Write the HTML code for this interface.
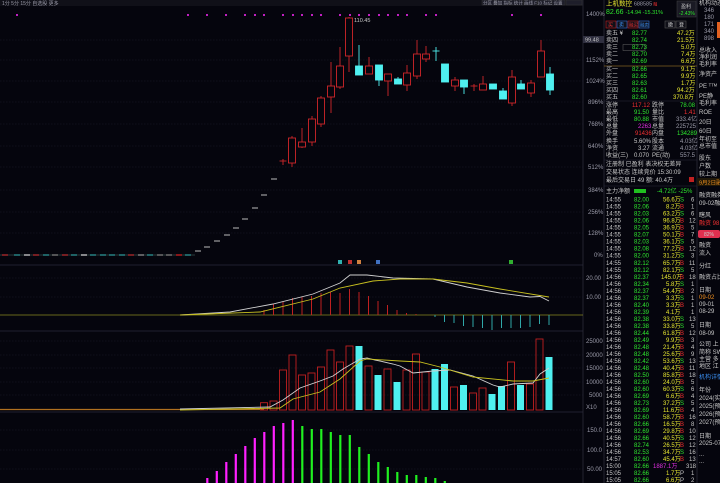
<!DOCTYPE html>
<html><head><meta charset="utf-8"><style>
html,body{margin:0;padding:0;background:#05050d;width:720px;height:483px;overflow:hidden}
svg{display:block}
text{font-family:"Liberation Sans","Noto Sans CJK SC",sans-serif;font-size:6px}
.g{fill:#2ee62e}.r{fill:#f03030}.y{fill:#e8e830}.w{fill:#c8c8c8}.d{fill:#9a9aa8}.p{fill:#e030e0}.o{fill:#f09020}.b{fill:#3a8ef0}
</style></head><body>
<svg width="720" height="483" viewBox="0 0 720 483" xmlns="http://www.w3.org/2000/svg">
<rect width="720" height="483" fill="#05050d"/>
<!-- top toolbar -->
<rect x="0" y="0" width="583" height="6" fill="#101018"/>
<text x="2" y="5" class="d" style="font-size:5px">1分  5分  15分  自选股  更多</text>
<g fill="#1e1e2a" stroke="#333" stroke-width="0.5">
<rect x="482" y="0" width="13" height="5"/><rect x="496" y="0" width="13" height="5"/><rect x="510" y="0" width="13" height="5"/><rect x="524" y="0" width="13" height="5"/><rect x="538" y="0" width="13" height="5"/><rect x="552" y="0" width="13" height="5"/><rect x="566" y="0" width="16" height="5"/></g>
<text x="483" y="4.5" class="d" style="font-size:4.5px">分区  叠加  指标  统计  画线  F10  标记  设置</text>
<!-- grid -->
<g stroke="#1a1a28" stroke-width="0.6" stroke-dasharray="1.5,1.5">
<line x1="0" y1="40" x2="583" y2="40"/><line x1="0" y1="60" x2="583" y2="60"/><line x1="0" y1="81" x2="583" y2="81"/><line x1="0" y1="102" x2="583" y2="102"/><line x1="0" y1="124" x2="583" y2="124"/><line x1="0" y1="146" x2="583" y2="146"/><line x1="0" y1="167" x2="583" y2="167"/><line x1="0" y1="190" x2="583" y2="190"/><line x1="0" y1="212" x2="583" y2="212"/><line x1="0" y1="233" x2="583" y2="233"/>
<line x1="0" y1="278" x2="583" y2="278"/><line x1="0" y1="297" x2="583" y2="297"/>
<line x1="0" y1="341" x2="583" y2="341"/><line x1="0" y1="355" x2="583" y2="355"/><line x1="0" y1="368" x2="583" y2="368"/><line x1="0" y1="382" x2="583" y2="382"/><line x1="0" y1="395" x2="583" y2="395"/>
<line x1="0" y1="430" x2="583" y2="430"/><line x1="0" y1="450" x2="583" y2="450"/><line x1="0" y1="469" x2="583" y2="469"/>
</g>
<g stroke="#2a2a3a" stroke-width="0.8"><line x1="0" y1="265" x2="583" y2="265"/><line x1="0" y1="331" x2="583" y2="331"/><line x1="0" y1="412" x2="583" y2="412"/><line x1="583" y1="0" x2="583" y2="483"/><line x1="604" y1="0" x2="604" y2="483"/><line x1="697" y1="0" x2="697" y2="483"/></g>
<!-- purple dots -->
<g fill="#c020c0">
<rect x="16" y="14" width="2" height="2"/><rect x="187" y="14" width="2" height="2"/><rect x="206" y="14" width="2" height="2"/><rect x="225" y="14" width="2" height="2"/><rect x="244" y="14" width="2" height="2"/><rect x="254" y="14" width="2" height="2"/><rect x="263" y="14" width="2" height="2"/><rect x="282" y="14" width="2" height="2"/><rect x="292" y="14" width="2" height="2"/><rect x="301" y="14" width="2" height="2"/><rect x="311" y="14" width="2" height="2"/><rect x="320" y="14" width="2" height="2"/><rect x="339" y="14" width="2" height="2"/><rect x="349" y="14" width="2" height="2"/><rect x="358" y="14" width="2" height="2"/><rect x="368" y="14" width="2" height="2"/><rect x="378" y="14" width="2" height="2"/><rect x="387" y="14" width="2" height="2"/><rect x="397" y="14" width="2" height="2"/><rect x="406" y="14" width="2" height="2"/><rect x="425" y="14" width="2" height="2"/><rect x="435" y="14" width="2" height="2"/><rect x="511" y="14" width="2" height="2"/><rect x="540" y="14" width="2" height="2"/></g>
<!-- flat early line -->
<line x1="0" y1="255" x2="195" y2="255" stroke="#2a3a3a" stroke-width="1"/>
<g stroke-width="1.2">
<line x1="2" y1="255" x2="8" y2="255" stroke="#c03030"/><line x1="14" y1="255" x2="20" y2="255" stroke="#30a0a0"/><line x1="24" y1="255" x2="30" y2="255" stroke="#ddd"/><line x1="33" y1="255" x2="39" y2="255" stroke="#c03030"/><line x1="43" y1="255" x2="49" y2="255" stroke="#30a0a0"/><line x1="52" y1="255" x2="58" y2="255" stroke="#888"/><line x1="62" y1="255" x2="68" y2="255" stroke="#c03030"/><line x1="71" y1="255" x2="77" y2="255" stroke="#30a0a0"/><line x1="81" y1="255" x2="87" y2="255" stroke="#ddd"/><line x1="90" y1="255" x2="96" y2="255" stroke="#30a0a0"/><line x1="100" y1="255" x2="106" y2="255" stroke="#30a0a0"/><line x1="109" y1="255" x2="115" y2="255" stroke="#30a0a0"/><line x1="119" y1="255" x2="125" y2="255" stroke="#30a0a0"/><line x1="128" y1="255" x2="134" y2="255" stroke="#c03030"/><line x1="138" y1="255" x2="144" y2="255" stroke="#999"/><line x1="147" y1="255" x2="153" y2="255" stroke="#30a0a0"/><line x1="157" y1="255" x2="163" y2="255" stroke="#888"/><line x1="166" y1="255" x2="172" y2="255" stroke="#888"/><line x1="176" y1="255" x2="182" y2="255" stroke="#e02020"/><line x1="185" y1="255" x2="191" y2="255" stroke="#30a0a0"/>
</g>
<g stroke="#bbb" stroke-width="1">
<line x1="195" y1="251" x2="201" y2="251"/><line x1="204" y1="247" x2="210" y2="247"/><line x1="214" y1="241" x2="220" y2="241"/><line x1="224" y1="235" x2="230" y2="235"/><line x1="233" y1="228" x2="239" y2="228"/><line x1="242" y1="219" x2="248" y2="219"/><line x1="252" y1="208" x2="258" y2="208"/><line x1="261" y1="195" x2="267" y2="195"/><line x1="271" y1="179" x2="277" y2="179"/>
</g>
<!-- candles -->
<g stroke="#d0262a" stroke-width="0.9" fill="#05050d">
<line x1="283" y1="159" x2="283" y2="165"/><line x1="279.5" y1="161" x2="286.5" y2="161"/>
<line x1="292" y1="136" x2="292" y2="167"/><rect x="288.5" y="138" width="7" height="25"/>
<line x1="302" y1="128" x2="302" y2="148"/><rect x="298.5" y="142" width="7" height="5"/>
<line x1="312" y1="116" x2="312" y2="146"/><rect x="308.5" y="119" width="7" height="23"/>
<line x1="321" y1="96" x2="321" y2="127"/><rect x="317.5" y="98" width="7" height="26"/>
<line x1="331" y1="62" x2="331" y2="113"/><rect x="327.5" y="86" width="7" height="11"/>
<line x1="340" y1="47" x2="340" y2="89"/><rect x="336.5" y="66" width="7" height="21"/>
<line x1="349" y1="17" x2="349" y2="72"/><rect x="345.5" y="18" width="7" height="38"/>
<line x1="369" y1="57" x2="369" y2="74"/><rect x="365.5" y="66" width="7" height="8"/>
<line x1="388" y1="74" x2="388" y2="96"/><rect x="384.5" y="74" width="7" height="7"/>
<line x1="407" y1="65" x2="407" y2="91"/><rect x="403.5" y="73" width="7" height="12"/>
<line x1="417" y1="40" x2="417" y2="79"/><rect x="413.5" y="54" width="7" height="22"/>
<line x1="426" y1="46" x2="426" y2="62"/><rect x="422.5" y="54" width="7" height="5"/>
<line x1="455" y1="77" x2="455" y2="91"/><rect x="451.5" y="80" width="7" height="6"/>
<line x1="474" y1="84" x2="474" y2="91"/><line x1="470.5" y1="86" x2="477.5" y2="86"/>
<line x1="483" y1="76" x2="483" y2="90"/><rect x="479.5" y="84" width="7" height="6"/>
<line x1="512" y1="70" x2="512" y2="106"/><rect x="508.5" y="77" width="7" height="26"/>
<line x1="531" y1="80" x2="531" y2="97"/><rect x="527.5" y="83" width="7" height="10"/>
<line x1="541" y1="40" x2="541" y2="77"/><rect x="537.5" y="51" width="7" height="26"/>
</g>
<g stroke="#4ff0f0" stroke-width="0.9" fill="#4ff0f0">
<line x1="359" y1="45" x2="359" y2="75"/><rect x="355.5" y="66" width="7" height="9"/>
<line x1="379" y1="65" x2="379" y2="86"/><rect x="375.5" y="65" width="7" height="15"/>
<line x1="398" y1="77" x2="398" y2="84"/><rect x="394.5" y="79" width="7" height="5"/>
<line x1="436" y1="47" x2="436" y2="61"/><line x1="432.5" y1="51" x2="439.5" y2="51"/>
<rect x="441.5" y="64" width="7" height="18"/>
<line x1="464" y1="80" x2="464" y2="94"/><rect x="460.5" y="80" width="7" height="7"/>
<rect x="489.5" y="84" width="7" height="5"/>
<line x1="503" y1="88" x2="503" y2="99"/><rect x="499.5" y="91" width="7" height="8"/>
<line x1="521" y1="80" x2="521" y2="89"/><rect x="517.5" y="84" width="7" height="5"/>
<line x1="550" y1="67" x2="550" y2="95"/><rect x="546.5" y="74" width="7" height="16"/>
</g>
<text x="354" y="22" class="w" style="font-size:5.5px">110.45</text>
<!-- markers -->
<rect x="338" y="260" width="4" height="4" fill="#30b0b0"/><rect x="348" y="260" width="4" height="4" fill="#c03030"/><rect x="357" y="260" width="4" height="4" fill="#d08040"/><rect x="376" y="260" width="4" height="4" fill="#4070c0"/><rect x="509" y="260" width="4" height="4" fill="#30b030"/>
<!-- MACD -->
<line x1="0" y1="315" x2="583" y2="315" stroke="#8a8a20" stroke-width="0.8"/>
<g stroke="#c02020" stroke-width="1">
<line x1="264" y1="315" x2="264" y2="310"/><line x1="273.5" y1="315" x2="273.5" y2="304"/><line x1="283" y1="315" x2="283" y2="302"/><line x1="292.5" y1="315" x2="292.5" y2="298"/><line x1="302" y1="315" x2="302" y2="297"/><line x1="311.5" y1="315" x2="311.5" y2="296"/><line x1="321" y1="315" x2="321" y2="293"/><line x1="330.5" y1="315" x2="330.5" y2="292"/><line x1="340" y1="315" x2="340" y2="293"/><line x1="349.5" y1="315" x2="349.5" y2="289"/><line x1="359" y1="315" x2="359" y2="292"/><line x1="368.5" y1="315" x2="368.5" y2="296"/><line x1="378" y1="315" x2="378" y2="301"/><line x1="387.5" y1="315" x2="387.5" y2="305"/><line x1="397" y1="315" x2="397" y2="310"/><line x1="406.5" y1="315" x2="406.5" y2="313"/><line x1="416" y1="315" x2="416" y2="314"/></g>
<g stroke="#30a8a8" stroke-width="1">
<line x1="435" y1="315" x2="435" y2="317"/><line x1="444.5" y1="315" x2="444.5" y2="322"/><line x1="454" y1="315" x2="454" y2="323"/><line x1="463.5" y1="315" x2="463.5" y2="326"/><line x1="473" y1="315" x2="473" y2="327"/><line x1="482.5" y1="315" x2="482.5" y2="328"/><line x1="492" y1="315" x2="492" y2="330"/><line x1="501.5" y1="315" x2="501.5" y2="328"/><line x1="511" y1="315" x2="511" y2="328"/><line x1="520.5" y1="315" x2="520.5" y2="328"/><line x1="530" y1="315" x2="530" y2="327"/><line x1="539.5" y1="315" x2="539.5" y2="324"/><line x1="549" y1="315" x2="549" y2="325"/></g>
<polyline fill="none" stroke="#d0d0d0" stroke-width="0.9" points="180,315 230,312 273,304 313,294 340,283 350,275 367,275 393,278 433,279 467,287 500,293 530,297 540,296.5 549,301"/>
<polyline fill="none" stroke="#c8c020" stroke-width="0.9" points="180,315 260,312 313,299 340,288 373,281 400,279 433,279 467,283 500,289 549,297"/>
<!-- volume -->
<line x1="0" y1="409.5" x2="264" y2="409.5" stroke="#b07020" stroke-width="1.2"/>
<g stroke="#c02020" stroke-width="0.9" fill="none">
<rect x="260.5" y="402.7" width="7" height="7.3"/><rect x="270" y="401" width="7" height="9"/><rect x="279.5" y="370" width="7" height="40"/><rect x="289" y="355" width="7" height="55"/><rect x="298.5" y="375" width="7" height="35"/><rect x="308" y="373" width="7" height="37"/><rect x="317.5" y="367" width="7" height="43"/><rect x="327" y="350" width="7" height="60"/><rect x="336.5" y="362" width="7" height="48"/><rect x="346" y="346" width="7" height="64"/><rect x="365" y="366" width="7" height="44"/><rect x="384" y="369" width="7" height="41"/><rect x="403" y="370" width="7" height="40"/><rect x="412.5" y="354" width="7" height="56"/><rect x="422" y="372" width="7" height="38"/><rect x="450.5" y="387" width="7" height="23"/><rect x="469.5" y="393" width="7" height="17"/><rect x="479" y="388" width="7" height="22"/><rect x="507.5" y="362" width="7" height="48"/><rect x="526.5" y="384" width="7" height="26"/><rect x="536" y="339" width="7" height="71"/></g>
<g fill="#4ff0f0">
<rect x="355.5" y="346" width="7" height="64"/><rect x="374.5" y="375" width="7" height="35"/><rect x="393.5" y="382" width="7" height="28"/><rect x="431.5" y="369" width="7" height="41"/><rect x="441" y="364" width="7" height="46"/><rect x="460" y="385" width="7" height="25"/><rect x="488.5" y="394" width="7" height="16"/><rect x="498" y="386" width="7" height="24"/><rect x="517" y="385" width="7" height="25"/><rect x="545.5" y="357" width="7" height="53"/></g>
<polyline fill="none" stroke="#d0d0d0" stroke-width="0.9" points="180,409 270,407 283,400 300,388 320,381 333,376 343,369 360,359 367,358 375,360 380,361 393,364 400,366 413,373 433,371 450,370 473,376 493,385 500,387 513,384 533,383 540,374 549,368"/>
<polyline fill="none" stroke="#c8c020" stroke-width="0.9" points="180,410 280,408 293,399 320,392 340,379 360,361 367,359 400,361 420,362 440,367 473,377 513,381 533,381 549,378"/>
<!-- bottom bars -->
<g stroke="#ff20ff" stroke-width="2.2">
<line x1="207.3" y1="483" x2="207.3" y2="478"/><line x1="216.8" y1="483" x2="216.8" y2="471"/><line x1="226.3" y1="483" x2="226.3" y2="462"/><line x1="235.8" y1="483" x2="235.8" y2="454"/><line x1="245.3" y1="483" x2="245.3" y2="446"/><line x1="254.8" y1="483" x2="254.8" y2="438"/><line x1="264.3" y1="483" x2="264.3" y2="432"/><line x1="273.8" y1="483" x2="273.8" y2="426"/><line x1="283.3" y1="483" x2="283.3" y2="423"/><line x1="292.8" y1="483" x2="292.8" y2="420"/></g>
<g stroke="#20f020" stroke-width="2.2">
<line x1="302.3" y1="483" x2="302.3" y2="426"/><line x1="311.8" y1="483" x2="311.8" y2="429"/><line x1="321.3" y1="483" x2="321.3" y2="429"/><line x1="330.8" y1="483" x2="330.8" y2="432"/><line x1="340.3" y1="483" x2="340.3" y2="435"/><line x1="349.8" y1="483" x2="349.8" y2="435"/><line x1="359.3" y1="483" x2="359.3" y2="447"/><line x1="368.8" y1="483" x2="368.8" y2="454"/><line x1="378.3" y1="483" x2="378.3" y2="462"/><line x1="387.8" y1="483" x2="387.8" y2="467"/><line x1="397.3" y1="483" x2="397.3" y2="472"/><line x1="406.8" y1="483" x2="406.8" y2="475"/><line x1="416.3" y1="483" x2="416.3" y2="475"/><line x1="425.8" y1="483" x2="425.8" y2="477"/><line x1="435.3" y1="483" x2="435.3" y2="478"/><line x1="444.8" y1="483" x2="444.8" y2="481"/></g>
<!-- axis labels -->
<g class="d" style="font-size:5.5px">
<text x="586" y="16">1400%</text><text x="586" y="62">1152%</text><text x="586" y="83">1024%</text><text x="588" y="104">896%</text><text x="588" y="126">768%</text><text x="588" y="148">640%</text><text x="588" y="169">512%</text><text x="588" y="192">384%</text><text x="588" y="214">256%</text><text x="588" y="235">128%</text><text x="594" y="257">0%</text>
<text x="586" y="280">20.00</text><text x="586" y="299">10.00</text>
<text x="586" y="343">25000</text><text x="586" y="357">20000</text><text x="586" y="370">15000</text><text x="586" y="384">10000</text><text x="589" y="397">5000</text><text x="586" y="409">X10</text>
<text x="587" y="432">150.0</text><text x="587" y="452">100.0</text><text x="587" y="471">50.00</text></g>
<rect x="583" y="36" width="21" height="7" fill="#303040"/><text x="585" y="41.5" class="w" style="font-size:5.5px">99.48</text>
<!-- right panel header -->
<text x="606" y="5.5" class="y" style="font-size:6.5px">上机数控 <tspan class="d" style="font-size:5.5px">688585</tspan><tspan class="r" style="font-size:4px"> 融</tspan></text>
<text x="606" y="14" class="g" style="font-size:7px">82.66 <tspan style="font-size:5.5px"> -14.94  -15.31%</tspan></text>
<rect x="677" y="1" width="19" height="16" fill="#1a1a24" stroke="#444" stroke-width="0.5"/><text x="681" y="8" class="w" style="font-size:5px">盈利</text><text x="679" y="15" class="g" style="font-size:5px">-2.43%</text>
<g stroke-width="0.6" fill="#101018"><rect x="606" y="21" width="10" height="7" stroke="#c02020"/><rect x="617" y="21" width="10" height="7" stroke="#3070d0"/><rect x="628" y="21" width="10" height="7" stroke="#c02020"/><rect x="639" y="21" width="10" height="7" stroke="#3070d0"/><rect x="665" y="21" width="10" height="7" stroke="#555"/><rect x="676" y="21" width="10" height="7" stroke="#555"/></g>
<text x="608" y="26.5" class="r" style="font-size:5px">买</text><text x="619" y="26.5" class="b" style="font-size:5px">卖</text><text x="629" y="26.5" class="r" style="font-size:4.5px">融买</text><text x="640" y="26.5" class="b" style="font-size:4.5px">融卖</text><text x="668" y="26.5" class="w" style="font-size:5px">撤</text><text x="679" y="26.5" class="w" style="font-size:5px">登</text>
<g style="font-size:5.5px">
<text x="606" y="35" class="w">卖五 ¥</text><text x="632" y="35" class="g">82.77</text><text x="677" y="35" class="y">47.2万</text>
<text x="606" y="42" class="w">卖四</text><text x="632" y="42" class="g">82.74</text><text x="677" y="42" class="y">21.5万</text>
<text x="606" y="49" class="w">卖三</text><rect x="623" y="44.5" width="22" height="6" fill="none" stroke="#666" stroke-width="0.5"/><text x="632" y="49" class="g">82.73</text><text x="681" y="49" class="y">5.0万</text>
<text x="606" y="56" class="w">卖二</text><text x="632" y="56" class="g">82.70</text><text x="681" y="56" class="y">7.4万</text>
<text x="606" y="63" class="w">卖一</text><text x="632" y="63" class="g">82.69</text><text x="681" y="63" class="y">6.6万</text>
<line x1="604" y1="66" x2="697" y2="66" stroke="#806020" stroke-width="0.8"/>
<text x="606" y="71" class="w">买一</text><text x="632" y="71" class="g">82.66</text><text x="681" y="71" class="y">9.1万</text>
<text x="606" y="78" class="w">买二</text><text x="632" y="78" class="g">82.65</text><text x="681" y="78" class="y">9.9万</text>
<text x="606" y="85" class="w">买三</text><text x="632" y="85" class="g">82.63</text><text x="681" y="85" class="y">1.7万</text>
<text x="606" y="92" class="w">买四</text><text x="632" y="92" class="g">82.61</text><text x="677" y="92" class="y">94.2万</text>
<text x="606" y="99" class="w">买五</text><text x="632" y="99" class="g">82.60</text><text x="673" y="99" class="y">370.8万</text>
<line x1="604" y1="101" x2="697" y2="101" stroke="#2a2a3a" stroke-width="0.6"/>
<text x="606" y="107" class="w">涨停</text><text x="632" y="107" class="r">117.12</text><text x="652" y="107" class="w">跌停</text><text x="680" y="107" class="g">78.08</text>
<text x="606" y="114" class="w">最高</text><text x="634" y="114" class="g">91.50</text><text x="652" y="114" class="w">量比</text><text x="684" y="114" class="r">1.41</text>
<text x="606" y="121" class="w">最低</text><text x="634" y="121" class="g">80.88</text><text x="652" y="121" class="w">市值</text><text x="676" y="121" class="d">333.4亿</text>
<text x="606" y="128" class="w">总量</text><text x="638" y="128" class="p">2263</text><text x="652" y="128" class="w">总量</text><text x="676" y="128" class="d">225725</text>
<text x="606" y="135" class="w">外盘</text><text x="635" y="135" class="r">91436</text><text x="652" y="135" class="w">内盘</text><text x="677" y="135" class="g">134289</text>
<text x="606" y="143" class="w">换手</text><text x="634" y="143" class="w">5.60%</text><text x="652" y="143" class="w">股本</text><text x="680" y="143" class="d">4.03亿</text>
<text x="606" y="150" class="w">净资</text><text x="638" y="150" class="w">3.27</text><text x="652" y="150" class="w">流通</text><text x="680" y="150" class="d">4.03亿</text>
<text x="606" y="157" class="w">收益(三)</text><text x="634" y="157" class="w">0.070</text><text x="652" y="157" class="w">PE(动)</text><text x="680" y="157" class="d">557.5</text>
<line x1="604" y1="160" x2="697" y2="160" stroke="#2a2a3a" stroke-width="0.6"/>
<text x="606" y="166" class="w">注册制 已盈利 表决权无差异</text>
<text x="606" y="174" class="w">交易状态 连续竞价 15:30:09</text>
<text x="606" y="182" class="w">最后交易日 49  额: 40.4万</text><rect x="689" y="177" width="5" height="5" fill="#c02020"/>
<line x1="604" y1="186" x2="697" y2="186" stroke="#2a2a3a" stroke-width="0.6"/>
<text x="606" y="193" class="w">主力净额</text><rect x="634" y="189" width="12" height="4" fill="#20c020"/><text x="657" y="193" class="g">-4.72亿 -25%</text>
</g>
<!-- trade ticks -->
<g style="font-size:5.5px">
<text x="606" y="201.5" class="w">14:55</text><text x="634" y="201.5" class="g">82.00</text><text x="663" y="201.5" class="y">56.6万</text><text x="680" y="201.5" class="g">S</text><text x="691" y="201.5" class="w">6</text>
<text x="606" y="208.5" class="w">14:55</text><text x="634" y="208.5" class="g">82.06</text><text x="666" y="208.5" class="y">8.2万</text><text x="680" y="208.5" class="r">B</text><text x="691" y="208.5" class="w">1</text>
<text x="606" y="215.6" class="w">14:55</text><text x="634" y="215.6" class="g">82.03</text><text x="663" y="215.6" class="y">63.2万</text><text x="680" y="215.6" class="g">S</text><text x="691" y="215.6" class="w">6</text>
<text x="606" y="222.6" class="w">14:55</text><text x="634" y="222.6" class="g">82.06</text><text x="663" y="222.6" class="y">96.8万</text><text x="680" y="222.6" class="r">B</text><text x="689" y="222.6" class="w">12</text>
<text x="606" y="229.6" class="w">14:55</text><text x="634" y="229.6" class="g">82.05</text><text x="663" y="229.6" class="y">36.9万</text><text x="680" y="229.6" class="r">B</text><text x="691" y="229.6" class="w">5</text>
<text x="606" y="236.7" class="w">14:55</text><text x="634" y="236.7" class="g">82.07</text><text x="663" y="236.7" class="y">50.1万</text><text x="680" y="236.7" class="r">B</text><text x="691" y="236.7" class="w">7</text>
<text x="606" y="243.7" class="w">14:55</text><text x="634" y="243.7" class="g">82.03</text><text x="663" y="243.7" class="y">36.1万</text><text x="680" y="243.7" class="g">S</text><text x="691" y="243.7" class="w">5</text>
<text x="606" y="250.7" class="w">14:55</text><text x="634" y="250.7" class="g">82.08</text><text x="663" y="250.7" class="y">77.2万</text><text x="680" y="250.7" class="r">B</text><text x="689" y="250.7" class="w">12</text>
<text x="606" y="257.7" class="w">14:55</text><text x="634" y="257.7" class="g">82.00</text><text x="663" y="257.7" class="y">31.2万</text><text x="680" y="257.7" class="g">S</text><text x="691" y="257.7" class="w">3</text>
<text x="606" y="264.8" class="w">14:55</text><text x="634" y="264.8" class="g">82.12</text><text x="663" y="264.8" class="y">65.7万</text><text x="680" y="264.8" class="r">B</text><text x="689" y="264.8" class="w">11</text>
<text x="606" y="271.8" class="w">14:55</text><text x="634" y="271.8" class="g">82.12</text><text x="663" y="271.8" class="y">82.1万</text><text x="680" y="271.8" class="g">S</text><text x="691" y="271.8" class="w">5</text>
<text x="606" y="278.8" class="w">14:56</text><text x="634" y="278.8" class="g">82.37</text><text x="661" y="278.8" class="y">145.0万</text><text x="680" y="278.8" class="r">B</text><text x="689" y="278.8" class="w">18</text>
<text x="606" y="285.9" class="w">14:56</text><text x="634" y="285.9" class="g">82.34</text><text x="666" y="285.9" class="y">5.8万</text><text x="680" y="285.9" class="g">S</text><text x="691" y="285.9" class="w">1</text>
<text x="606" y="292.9" class="w">14:56</text><text x="634" y="292.9" class="g">82.37</text><text x="663" y="292.9" class="y">54.4万</text><text x="680" y="292.9" class="r">B</text><text x="691" y="292.9" class="w">2</text>
<text x="606" y="299.9" class="w">14:56</text><text x="634" y="299.9" class="g">82.37</text><text x="666" y="299.9" class="y">3.3万</text><text x="680" y="299.9" class="g">S</text><text x="691" y="299.9" class="w">1</text>
<text x="606" y="306.9" class="w">14:56</text><text x="634" y="306.9" class="g">82.40</text><text x="666" y="306.9" class="y">3.3万</text><text x="680" y="306.9" class="r">B</text><text x="691" y="306.9" class="w">1</text>
<text x="606" y="314" class="w">14:56</text><text x="634" y="314" class="g">82.39</text><text x="666" y="314" class="y">4.1万</text><text x="691" y="314" class="w">1</text>
<text x="606" y="321" class="w">14:56</text><text x="634" y="321" class="g">82.38</text><text x="663" y="321" class="y">33.0万</text><text x="680" y="321" class="g">S</text><text x="689" y="321" class="w">13</text>
<text x="606" y="328" class="w">14:56</text><text x="634" y="328" class="g">82.38</text><text x="663" y="328" class="y">33.8万</text><text x="680" y="328" class="g">S</text><text x="691" y="328" class="w">5</text>
<text x="606" y="335" class="w">14:56</text><text x="634" y="335" class="g">82.44</text><text x="663" y="335" class="y">61.8万</text><text x="680" y="335" class="r">B</text><text x="689" y="335" class="w">12</text>
<text x="606" y="342" class="w">14:56</text><text x="634" y="342" class="g">82.49</text><text x="666" y="342" class="y">9.9万</text><text x="680" y="342" class="r">B</text><text x="691" y="342" class="w">3</text>
<text x="606" y="349" class="w">14:56</text><text x="634" y="349" class="g">82.48</text><text x="663" y="349" class="y">21.4万</text><text x="680" y="349" class="r">B</text><text x="691" y="349" class="w">4</text>
<text x="606" y="356" class="w">14:56</text><text x="634" y="356" class="g">82.48</text><text x="663" y="356" class="y">25.6万</text><text x="680" y="356" class="r">B</text><text x="691" y="356" class="w">9</text>
<text x="606" y="363" class="w">14:56</text><text x="634" y="363" class="g">82.42</text><text x="663" y="363" class="y">53.6万</text><text x="680" y="363" class="g">S</text><text x="689" y="363" class="w">13</text>
<text x="606" y="370" class="w">14:56</text><text x="634" y="370" class="g">82.48</text><text x="663" y="370" class="y">40.4万</text><text x="680" y="370" class="r">B</text><text x="689" y="370" class="w">11</text>
<text x="606" y="377" class="w">14:56</text><text x="634" y="377" class="g">82.50</text><text x="663" y="377" class="y">85.8万</text><text x="680" y="377" class="r">B</text><text x="689" y="377" class="w">18</text>
<text x="606" y="384" class="w">14:56</text><text x="634" y="384" class="g">82.60</text><text x="663" y="384" class="y">24.0万</text><text x="680" y="384" class="r">B</text><text x="691" y="384" class="w">5</text>
<text x="606" y="391" class="w">14:56</text><text x="634" y="391" class="g">82.60</text><text x="663" y="391" class="y">60.3万</text><text x="680" y="391" class="g">S</text><text x="691" y="391" class="w">6</text>
<text x="606" y="398" class="w">14:56</text><text x="634" y="398" class="g">82.69</text><text x="666" y="398" class="y">6.6万</text><text x="680" y="398" class="r">B</text><text x="691" y="398" class="w">4</text>
<text x="606" y="405" class="w">14:56</text><text x="634" y="405" class="g">82.73</text><text x="663" y="405" class="y">37.2万</text><text x="680" y="405" class="g">S</text><text x="691" y="405" class="w">5</text>
<text x="606" y="412" class="w">14:56</text><text x="634" y="412" class="g">82.69</text><text x="663" y="412" class="y">11.6万</text><text x="680" y="412" class="r">B</text><text x="691" y="412" class="w">4</text>
<text x="606" y="419" class="w">14:56</text><text x="634" y="419" class="g">82.60</text><text x="663" y="419" class="y">58.7万</text><text x="680" y="419" class="r">B</text><text x="689" y="419" class="w">16</text>
<text x="606" y="426" class="w">14:56</text><text x="634" y="426" class="g">82.66</text><text x="663" y="426" class="y">16.5万</text><text x="680" y="426" class="r">B</text><text x="691" y="426" class="w">8</text>
<text x="606" y="433" class="w">14:56</text><text x="634" y="433" class="g">82.69</text><text x="663" y="433" class="y">29.8万</text><text x="680" y="433" class="r">B</text><text x="689" y="433" class="w">10</text>
<text x="606" y="440" class="w">14:56</text><text x="634" y="440" class="g">82.66</text><text x="663" y="440" class="y">40.5万</text><text x="680" y="440" class="g">S</text><text x="689" y="440" class="w">12</text>
<text x="606" y="447" class="w">14:56</text><text x="634" y="447" class="g">82.74</text><text x="663" y="447" class="y">26.5万</text><text x="680" y="447" class="r">B</text><text x="689" y="447" class="w">12</text>
<text x="606" y="454" class="w">14:56</text><text x="634" y="454" class="g">82.53</text><text x="663" y="454" class="y">34.7万</text><text x="680" y="454" class="g">S</text><text x="689" y="454" class="w">16</text>
<text x="606" y="461" class="w">14:57</text><text x="634" y="461" class="g">82.60</text><text x="663" y="461" class="y">45.4万</text><text x="680" y="461" class="r">B</text><text x="689" y="461" class="w">13</text>
<text x="606" y="468" class="w">15:00</text><text x="634" y="468" class="g">82.66</text><text x="653" y="468" class="p">1887.1万</text><text x="686" y="468" class="w">318</text>
<text x="606" y="475" class="w">15:05</text><text x="634" y="475" class="g">82.66</text><text x="666" y="475" class="y">1.7万</text><text x="680" y="475" class="w">P</text><text x="691" y="475" class="w">1</text>
<text x="606" y="482" class="w">15:05</text><text x="634" y="482" class="g">82.66</text><text x="666" y="482" class="y">6.6万</text><text x="680" y="482" class="w">P</text><text x="691" y="482" class="w">2</text>
</g>
<!-- far right column -->
<g class="w" style="font-size:5.5px">
<text x="699" y="5">机构动态</text><text x="704" y="12" class="d">346</text><text x="704" y="19" class="d">180</text><text x="704" y="26" class="d">171</text><text x="704" y="33" class="d">340</text><text x="704" y="40" class="d">898</text>
<text x="699" y="52">总收入</text><text x="699" y="59">净利润</text><text x="699" y="66">毛利率</text><text x="699" y="76">净资产</text>
<text x="699" y="88">PE ᵀᵀᴹ</text><text x="699" y="98">PE静</text><text x="699" y="105">毛利率</text><text x="699" y="114">ROE</text>
<text x="699" y="124">20日</text><text x="699" y="133">60日</text><text x="699" y="141">年初至</text><text x="699" y="148">总市值</text>
<text x="699" y="160">股东</text><text x="699" y="168">户数</text><text x="699" y="176">较上期</text>
<text x="699" y="197">融资融券</text><text x="699" y="205">09-02融</text><text x="699" y="217">瞎风</text><text x="699" y="225" class="r">融资 98.</text>
<text x="699" y="247">融资</text><text x="699" y="255">流入</text><text x="699" y="268">分红</text><text x="699" y="279">融资占比</text>
<text x="699" y="292">日期</text><text x="699" y="299" class="o">09-02</text><text x="699" y="306">09-01</text><text x="699" y="313">08-29</text>
<text x="699" y="327">日期</text><text x="699" y="335">08-09</text><text x="699" y="346">公司 上</text><text x="699" y="354">简称 SW</text><text x="699" y="361">主营 多</text><text x="699" y="368">地区 江</text>
<text x="699" y="379" class="b">机构详情</text><text x="699" y="392">年份</text><text x="699" y="400">2024(实</text><text x="699" y="408">2025(预</text><text x="699" y="416">2026(预</text><text x="699" y="424">2027(预</text>
<text x="699" y="438">日期</text><text x="699" y="445">2025-07</text><text x="699" y="456">...</text><text x="699" y="463">...</text>
</g>
<rect x="717" y="22" width="3" height="16" fill="#e06020"/>
<rect x="697" y="178" width="23" height="8" fill="#201808"/><text x="699" y="184.5" class="o" style="font-size:5.5px">9月2日融</text>
<rect x="698" y="230" width="22" height="8" rx="2" fill="#e03050"/><text x="704" y="236" class="w" style="font-size:5px">82%</text>
</svg>
</body></html>
